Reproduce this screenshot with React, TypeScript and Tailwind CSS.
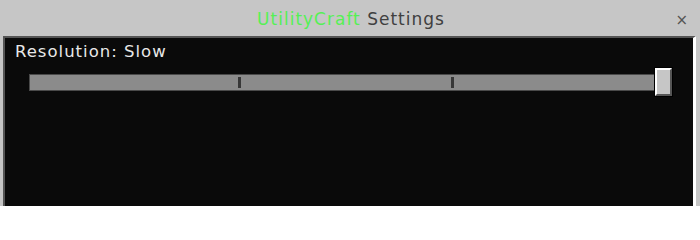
const FONT = { fontFamily: '"DejaVu Sans", "Liberation Sans", sans-serif' };

function Slider() {
  return (
    <div className="flex items-center ml-[24px] mr-[21px] mt-[6px]">
      <div className="flex-1 h-[17px] bg-[#8b8b8b] border border-[#4a4a4a] flex items-center">
        <div className="w-[208px]" />
        <div className="w-[3px] h-[11px] bg-[#373737]" />
        <div className="w-[210px]" />
        <div className="w-[3px] h-[11px] bg-[#373737]" />
        <div className="flex-1" />
      </div>
      <div className="w-[17px] h-[28px] bg-[#c6c6c6] border-t-2 border-l-2 border-t-white border-l-white border-b-2 border-r-2 border-b-[#555555] border-r-[#555555] outline outline-1 outline-black" />
    </div>
  );
}

export default function App() {
  return (
    <div className="w-[700px] h-[206px] bg-[#c6c6c6] flex flex-col overflow-hidden" style={FONT}>
      <div className="relative h-[36px] flex items-center justify-center">
        <span className="text-[17px] tracking-[1px] pt-[4px] ml-[2px]">
          <span className="text-[#55f055]">UtilityCraft</span>{' '}
          <span className="text-[#404040]">Settings</span>
        </span>
        <span className="absolute right-[12px] top-[9px] text-[#555555] text-[15px]">×</span>
      </div>
      <div className="flex-1 ml-[3px] mr-[4px] bg-[#0a0a0a] border-t-2 border-l-2 border-t-[#555555] border-l-[#555555] border-r-[3px] border-r-white">
        <div className="pl-[10px] pt-[4px] text-[16.5px] tracking-[1px] text-[#e8e8e8] leading-[20px]">Resolution: Slow</div>
        <Slider />
      </div>
    </div>
  );
}
